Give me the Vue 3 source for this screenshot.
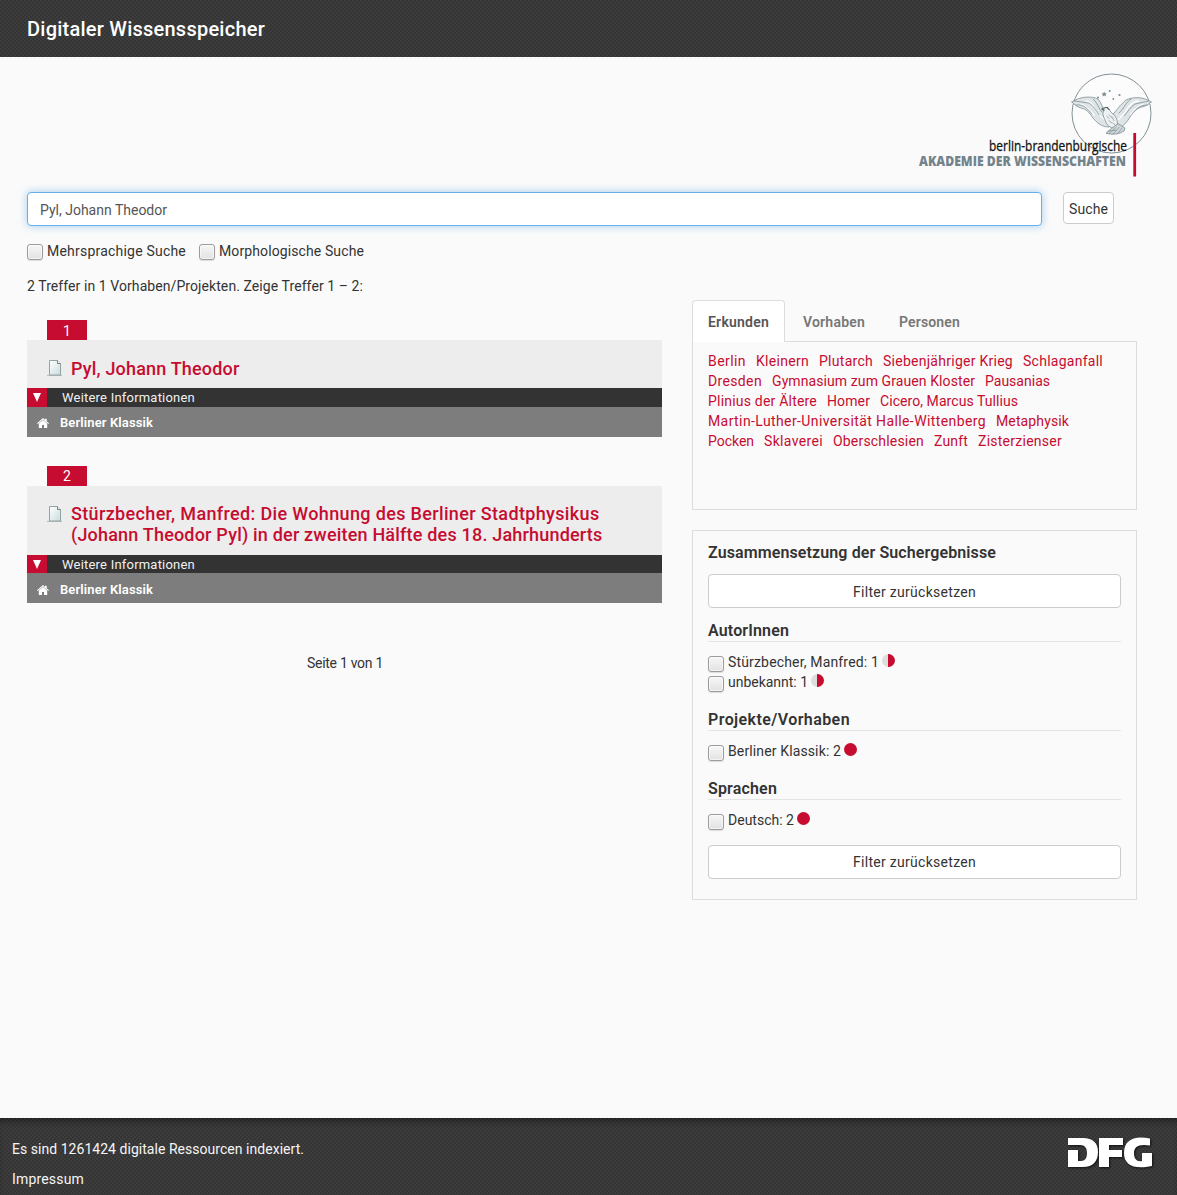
<script setup>
import { ref } from 'vue'

// Tracks a line of text out to the given width in pixels.
const vFit = (el, { value }) => {
  el.style.letterSpacing = '0px'
  const range = document.createRange()
  range.selectNodeContents(el)
  const natural = range.getBoundingClientRect().width
  el.style.letterSpacing = (value - natural) / el.textContent.length + 'px'
}

const query = ref('Pyl, Johann Theodor')
const options = [
  { label: 'Mehrsprachige Suche', w: 139 },
  { label: 'Morphologische Suche', w: 145 },
]
const results = [
  { lines: [['Pyl, Johann Theodor', 168.5]], project: 'Berliner Klassik' },
  {
    lines: [
      ['Stürzbecher, Manfred: Die Wohnung des Berliner Stadtphysikus', 528.5],
      ['(Johann Theodor Pyl) in der zweiten Hälfte des 18. Jahrhunderts', 531.5],
    ],
    project: 'Berliner Klassik',
  },
]
const tabs = [['Erkunden', 61], ['Vorhaben', 62], ['Personen', 61]]
const topics = [
  [['Berlin', 38], ['Kleinern', 53], ['Plutarch', 54], ['Siebenjähriger Krieg', 130], ['Schlaganfall', 80]],
  [['Dresden', 54], ['Gymnasium zum Grauen Kloster', 203], ['Pausanias', 65]],
  [['Plinius der Ältere', 109], ['Homer', 43], ['Cicero, Marcus Tullius', 138]],
  [['Martin-Luther-Universität Halle-Wittenberg', 278], ['Metaphysik', 73]],
  [['Pocken', 46], ['Sklaverei', 59], ['Oberschlesien', 91], ['Zunft', 34], ['Zisterzienser', 84]],
]
const facets = [
  { title: 'AutorInnen', w: 81, items: [['Stürzbecher, Manfred: 1', 151, true], ['unbekannt: 1', 80, true]] },
  { title: 'Projekte/Vorhaben', w: 142, items: [['Berliner Klassik: 2', 113, false]] },
  { title: 'Sprachen', w: 69, items: [['Deutsch: 2', 66, false]] },
]
</script>

<template>
  <div class="page">
    <header class="top"><h1 v-fit="238">Digitaler Wissensspeicher</h1></header>

    <main>
      <div class="brand">
        <svg class="logo" width="240" height="110" viewBox="0 0 240 110">
          <circle cx="196.500" cy="43.500" r="39.500" fill="#fcfcfc" stroke="#829196" />
          <g fill="none" stroke="#7f8f95" stroke-width=".8" stroke-linecap="round">
            <g transform="translate(0 -2)">
              <path fill="#dfe5e7" d="M157 34c8-6 20-6 26-3 4 4 4 9 7 12 3 3 4 5 4 8v8c-7 0-12-4-16-9-4-6-7-9-12-10-4-1-6-3-9-6zM236 34c-8-6-19-5-25-2-6 5-9 10-12 13l-2 4 5 12c6-2 10-7 13-12 4-6 7-9 12-10 4-1 6-2 9-5z" />
              <path stroke="#fff" stroke-width="1.300" d="M171 33c6 1 8 6 10 10s6 6 9 9M166 36c6 2 10 7 13 11M223 33c-7 1-10 6-12 10s-6 6-8 9M228 36c-6 2-9 6-12 10" />
              <path d="M159 33l15 2c5 3 7 8 10 12M161 37c9-1 12 5 16 9M178 31c5 4 5 9 9 13M234 33l-14 3c-5 3-7 8-11 12M232 37c-9 0-11 5-15 9M216 31c-6 4-7 10-12 14" />
            </g>
            <g transform="translate(0 8.500) scale(1 .74)">
              <path stroke="#6d7e85" fill="#eef1f2" d="M187 42l4-3c3 1 4 3 4 5l3 4c4 5 5 10 4 17l-4 2c-5-2-7-6-8-11-2-5-3-9-1-14z" />
              <path fill="#cfd7da" stroke="#6d7e85" d="M197 67l6-6 7 6-1 4c-6 5-12 5-18 3l5-6z" />
              <path d="M192 51l2 3m0-5l3 4m-3 4l3 3m0-8l2 5m-1 3l2 3M194 74l7-8m-3 9l6-9m-1 8l4-7m-14 4l8-1" />
              <path stroke="#506169" stroke-width="1.300" d="M188 40l4-1 2 3m-7-1l2 2" />
            </g>
          </g>
          <g fill="#7c8b91"><path d="M189.200 21.500l.8 1.700 1.900.2-1.400 1.300.4 1.800-1.700-.9-1.700.9.4-1.800-1.400-1.300 1.900-.2z"/><circle cx="183" cy="27.500" r="1"/><circle cx="194.700" cy="21" r="1"/><circle cx="204.500" cy="25" r="1.100"/><circle cx="198.300" cy="29" r=".9"/></g>
          <text class="brand-top" x="74" y="80.500" textLength="138" lengthAdjust="spacingAndGlyphs">berlin-brandenburgische</text>
          <text class="brand-main" x="4" y="96" textLength="207" lengthAdjust="spacingAndGlyphs">AKADEMIE DER WISSENSCHAFTEN</text>
          <path fill="#c40d2e" d="M218.300 63h2.800v43.500h-2.800z" />
        </svg>
      </div>

      <div class="search">
        <label class="field"><span v-fit="127">{{ query }}</span></label>
        <button type="button"><span v-fit="39">Suche</span></button>
      </div>
      <div class="options">
        <label v-for="o in options" :key="o.label"><i class="box"></i><span v-fit="o.w">{{ o.label }}</span></label>
      </div>
      <p class="summary"><span v-fit="336">2 Treffer in 1 Vorhaben/Projekten. Zeige Treffer 1 – 2:</span></p>

      <div class="columns">
        <section class="results">
          <article v-for="(r, i) in results" :key="i" :class="{ two: r.lines.length > 1 }">
            <div class="num">{{ i + 1 }}</div>
            <div class="heading">
              <svg class="doc" width="16" height="18" viewBox="0 0 16 18">
                <defs>
                  <linearGradient :id="'paper' + i" x2="1" y2="1"><stop stop-color="#fff" /><stop offset="1" stop-color="#c9dcdc" /></linearGradient>
                </defs>
                <path d="M0 16.500h15" stroke="#b8bcbc" />
                <path d="M2.500 1.500h8l3 3v11.500h-11z" :fill="`url(#paper${i})`" stroke="#92a3a3" />
                <path d="M10.500 1.500v3h3" fill="#fff" stroke="#71807f" />
              </svg>
              <h2><span v-for="l in r.lines" :key="l[0]" v-fit="l[1]">{{ l[0] }}</span></h2>
            </div>
            <div class="more">
              <div class="arrow"><svg width="8" height="9" viewBox="0 0 8 9"><path d="M0 0h8L4 9z" fill="#fff" /></svg></div>
              <span v-fit="133">Weitere Informationen</span>
            </div>
            <div class="project">
              <svg width="12" height="10" viewBox="0 0 12 10" fill="#fff"><path d="M6 0l2 1.700V.7h1.700v2.500L12 5.200l-.7.8L6 1.500.7 6 0 5.200z" /><path d="M6 2.100l4.200 3.500V10H7V7H5v3H1.800V5.600z" /></svg>
              <span v-fit="93">{{ r.project }}</span>
            </div>
          </article>
          <p class="pager"><span v-fit="76">Seite 1 von 1</span></p>
        </section>

        <aside>
          <nav>
            <a v-for="(t, i) in tabs" :key="t[0]" :class="{ active: i === 0 }"><span v-fit="t[1]">{{ t[0] }}</span></a>
          </nav>
          <div class="topics">
            <div v-for="(row, i) in topics" :key="i" class="row">
              <a v-for="t in row" :key="t[0]" :style="{ width: t[1] + 'px' }"><span v-fit="t[1]">{{ t[0] }}</span></a>
            </div>
          </div>
          <div class="filters">
            <h3><span v-fit="288">Zusammensetzung der Suchergebnisse</span></h3>
            <button type="button"><span v-fit="123">Filter zurücksetzen</span></button>
            <div v-for="f in facets" :key="f.title" class="facet">
              <h4><span v-fit="f.w">{{ f.title }}</span></h4>
              <label v-for="it in f.items" :key="it[0]"><i class="box"></i><span v-fit="it[1]">{{ it[0] }}</span><i class="pie" :class="{ half: it[2] }"></i></label>
            </div>
            <button type="button" class="last"><span v-fit="123">Filter zurücksetzen</span></button>
          </div>
        </aside>
      </div>
    </main>

    <footer>
      <div>
        <p><span v-fit="292">Es sind 1261424 digitale Ressourcen indexiert.</span></p>
        <p><span v-fit="72">Impressum</span></p>
      </div>
      <svg class="dfg" width="88" height="34" viewBox="0 0 88 34" role="img" aria-label="DFG">
        <g fill="#fff">
          <path d="M1 1h15c10 0 15 5 15 14s-5 15-15 15H1V13h10v11h3c4 0 6-3 6-8s-2-8-7-8H1z" />
          <path d="M32 1h24v7H42v5h13v7H42v10H32z" />
          <path d="M83 1.500v7c-11-2-16 1-16 7.500 0 6 3 9 8 8v-8h10v13c-18 4-28-1-28-13C57 3 67-2 83 1.500z" />
        </g>
      </svg>
    </footer>
  </div>
</template>

<style>
body { background: #fafafa; }
</style>

<style scoped>
* { box-sizing: border-box; }
.page {
  display: flex;
  flex-direction: column;
  height: 1195px;
  overflow: hidden;
  font: 14px/20px Roboto, "Noto Sans", sans-serif;
  color: #333;
  background: #fafafa;
}
h1, h2, h3, h4, p { margin: 0; }
span { white-space: nowrap; }
.top, footer {
  background-color: #393939;
  background-image: conic-gradient(#343434 25%, #3d3d3d 0 50%, #343434 0 75%, #3d3d3d 0);
  background-size: 4px 4px;
}
.top { height: 57px; flex: none; padding: 18px 27px; }
h1 { display: inline-block; font-size: 20px; line-height: 22px; font-weight: 500; color: #fff; white-space: nowrap; }
main { flex: 1; padding: 0 27px; }
.brand { display: flex; justify-content: flex-end; height: 135px; padding-top: 13px; }
.logo { margin-right: -5px; }
.brand-top { font: 14px "Open Sans", sans-serif; fill: #111; stroke: #111; stroke-width: .3; }
.brand-main { font: 800 13.500px "Open Sans", sans-serif; fill: #74838a; }
.search { display: flex; gap: 21px; }
.field {
  width: 1015px; height: 34px; padding: 7px 12px; background: #fff; color: #555;
  border: 1px solid #66afe9; border-radius: 4px;
  box-shadow: 0 0 8px rgba(102, 175, 233, .6);
}
button {
  display: block; padding: 2px 0 0; font: inherit; color: #333; background: #fff;
  border: 1px solid #ccc; border-radius: 4px;
}
.search button { width: 51px; height: 32px; }
.options { display: flex; gap: 13px; margin-top: 15px; height: 20px; }
label { display: flex; }
.box {
  width: 16px; height: 16px; flex: none; margin: 3px 4px 0 0;
  border: 1px solid #9c9c9c; border-radius: 3px;
  background: linear-gradient(#f7f7f7, #e2e2e2);
  box-shadow: inset 0 0 0 1px rgba(255, 255, 255, .6), 0 1px 1px rgba(0, 0, 0, .12);
}
.summary { margin-top: 15px; }
.columns { display: flex; gap: 30px; margin-top: 4px; }
.results { width: 635px; padding-top: 20px; }
article { margin-bottom: 29px; }
.num { width: 40px; height: 20px; margin-left: 20px; text-align: center; line-height: 22px; color: #fff; background: #c60c30; }
.two .num { line-height: 20px; }
.heading { display: flex; gap: 8px; height: 48px; padding: 18px 20px 0; background: #ededed; }
.two .heading { height: 69px; padding-top: 17px; }
.doc { margin-top: 1px; }
.two .doc { margin-top: 2px; }
h2 { font-size: 18px; line-height: 21px; font-weight: 500; color: #c60c30; }
h2 span { display: table; }
.more { display: flex; height: 19px; gap: 15px; background: #333; color: #f1f1f1; font-size: 13px; line-height: 19px; }
.two .more { height: 18px; }
.arrow { display: flex; align-items: center; justify-content: center; width: 20px; background: #c60c30; }
.project { display: flex; align-items: center; gap: 11px; height: 30px; padding: 2px 10px 0; background: #7d7d7d; color: #fff; font-size: 13px; font-weight: 600; }
.two .project { padding-top: 3px; }
.pager { margin-top: 50px; padding-left: 1px; text-align: center; }
aside { width: 445px; }
nav { display: flex; gap: 2px; height: 42px; border-bottom: 1px solid #ddd; }
nav a { height: 42px; padding: 11px 15px 0; border: 1px solid transparent; border-bottom: 0; font-weight: 600; color: #777; }
nav a.active { background: #fff; color: #555; border-color: #ddd; border-radius: 4px 4px 0 0; }
.topics { height: 168px; padding: 9px 15px; border: 1px solid #ddd; border-top: 0; }
.row { display: flex; gap: 10px; color: #c60c30; }
.filters { height: 370px; margin-top: 20px; padding: 13px 15px; border: 1px solid #ddd; }
h3, h4 { font-size: 16px; line-height: 18px; font-weight: 600; }
.filters button { width: 100%; height: 34px; }
h3 + button { margin-top: 12px; }
.facet { margin-top: 14px; }
h4 { height: 20px; margin-bottom: 10px; border-bottom: 1px solid #e5e5e5; }
.facet + .facet { margin-top: 19px; }
.facet label { height: 20px; }
.facet .box { margin-top: 4px; }
.pie { width: 13px; height: 13px; margin: 2px 0 0 3px; border-radius: 50%; background: #c60c30; }
.pie.half { background: linear-gradient(90deg, #ddd 50%, #c60c30 50%); }
.filters .last { margin-top: 15px; padding-top: 0; }
footer {
  display: flex; justify-content: space-between; height: 77px; flex: none; padding: 21px 22px 0 12px;
  color: #f5f5f5; box-shadow: inset 0 7px 7px -4px rgba(0, 0, 0, .4);
}
footer p { margin-bottom: 10px; }
.dfg { margin-top: -2px; filter: drop-shadow(1px 1px 1px #111); }
</style>
